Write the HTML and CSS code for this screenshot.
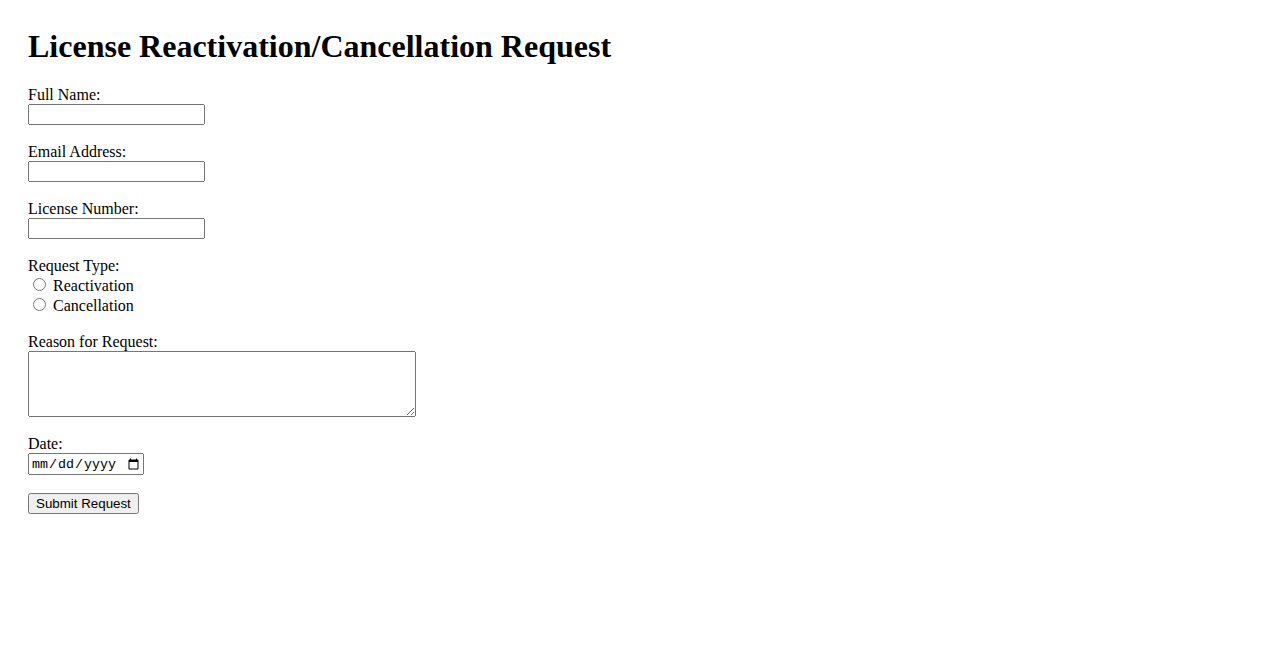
FILE: index.html
```html
<!DOCTYPE html>
<html lang="en">
<head>
<meta charset="utf-8">
<title>License Reactivation/Cancellation Request</title>
<link rel="stylesheet" href="styles.css">
</head>
<body>
<h1 class="title">License Reactivation/Cancellation Request</h1>
<form class="form">
  <label class="field-label" for="fullName">Full Name:</label>
  <input class="text-input" type="text" id="fullName" name="fullName"><br><br>

  <label class="field-label" for="email">Email Address:</label>
  <input class="text-input" type="email" id="email" name="email"><br><br>

  <label class="field-label" for="licenseNumber">License Number:</label>
  <input class="text-input" type="text" id="licenseNumber" name="licenseNumber"><br><br>

  <label class="field-label">Request Type:</label>
  <input class="radio" type="radio" id="reactivation" name="requestType" value="reactivation">
  <label class="radio-label" for="reactivation">Reactivation</label><br>
  <input class="radio" type="radio" id="cancellation" name="requestType" value="cancellation">
  <label class="radio-label" for="cancellation">Cancellation</label><br><br>

  <label class="field-label" for="reason">Reason for Request:</label>
  <textarea class="textarea" id="reason" name="reason"></textarea><br><br>

  <label class="field-label" for="date">Date:</label>
  <input class="date-input" type="date" id="date" name="date"><br><br>

  <button class="submit" type="submit">Submit Request</button>
</form>
</body>
</html>
```

FILE: styles.css
```css
body {
  margin: 8px;
  padding: 20px;
  font-family: "Liberation Serif", "Times New Roman", serif;
  font-size: 16px;
  color: #000;
  background: #fff;
}

.title {
  margin: 0 0 21.44px 0;
  font-size: 32px;
  font-weight: bold;
}

.form {
  margin: 0;
}

.field-label {
  display: block;
}

.text-input {
  width: 177px;
  height: 21px;
  box-sizing: border-box;
  font-family: "Liberation Sans", Arial, sans-serif;
  font-size: 13.33px;
}

.textarea {
  width: 388px;
  height: 66px;
  box-sizing: border-box;
  vertical-align: text-bottom;
  margin-bottom: -1px;
}

.date-input {
  width: 116px;
  height: 22px;
  box-sizing: border-box;
  font-family: "Liberation Mono", monospace;
  font-size: 13.33px;
}

.submit {
  font-family: "Liberation Sans", Arial, sans-serif;
  font-size: 13.33px;
  height: 21px;
}
```
